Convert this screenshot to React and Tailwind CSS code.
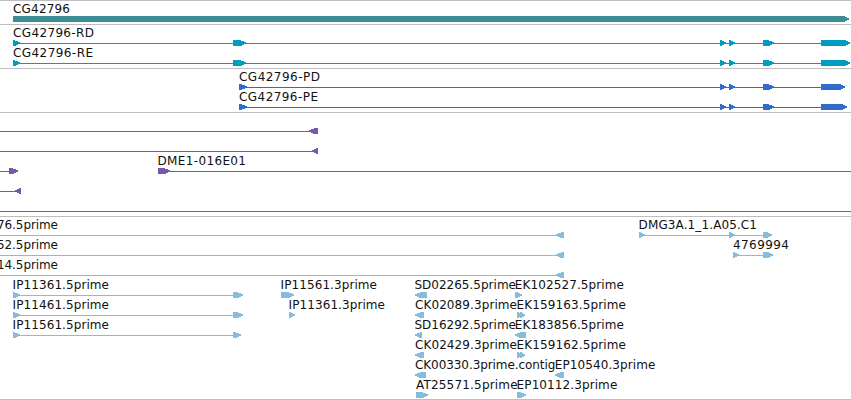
import React from "react";

// Exon glyph: [start, end, tip length]; a negative tip points left.
// Label: [x, text, width].
const tracks = [
  { color: "#3d8e94", lanes: [
    { labels: [[13, "CG42796", 57]], exons: [[13, 849, 6]] },
  ]},
  { color: "#009dc0", lanes: [
    { labels: [[13, "CG42796-RD", 81]], lines: [[13, 845]], exons: [[13, 20, 7], [233, 246, 7], [720, 726, 6], [729, 735, 6], [763, 769, 6], [765, 774, 7], [821, 850, 6]] },
    { labels: [[13, "CG42796-RE", 80]], lines: [[13, 845]], exons: [[13, 20, 7], [233, 246, 7], [720, 726, 6], [729, 735, 6], [763, 769, 6], [765, 774, 7], [821, 850, 6]] },
  ]},
  { color: "#306bcd", lanes: [
    { labels: [[239, "CG42796-PD", 81]], lines: [[239, 840]], exons: [[239, 247, 8], [720, 726, 6], [729, 735, 6], [763, 769, 6], [765, 774, 7], [821, 845, 6]] },
    { labels: [[239, "CG42796-PE", 79]], lines: [[239, 842]], exons: [[239, 247, 8], [720, 726, 6], [729, 735, 6], [763, 769, 6], [765, 774, 7], [821, 847, 6]] },
  ]},
  { color: "#7759a8", lanes: [
    { lines: [[0, 314]], exons: [[309, 318, -7]] },
    { lines: [[0, 316]], exons: [[312, 318, -6]] },
    { labels: [[157.5, "DME1-016E01", 88.5]], lines: [[0, 12], [160, 851]], exons: [[9, 18, 7], [158, 170, 7]] },
    { lines: [[0, 18]], exons: [[15, 21, -6]] },
    { lines: [[0, 851]] },
  ]},
  { color: "#87bcdc", lanes: [
    { labels: [[-3, "76.5prime", 61], [638.6, "DMG3A.1_1.A05.C1", 118.4]], lines: [[0, 560], [639, 769]], exons: [[556, 564, -7], [639, 645, 6], [729, 735, 6], [763, 769, 6], [765, 772, 6]] },
    { labels: [[-3, "52.5prime", 61], [733, "4769994", 56]], lines: [[0, 560], [733, 769]], exons: [[556, 564, -7], [733, 739, 6], [763, 769, 6], [765, 773, 6]] },
    { labels: [[-3, "14.5prime", 61]], lines: [[0, 560]], exons: [[556, 564, -7]] },
    { labels: [[12.6, "IP11361.5prime", 96.4], [280.6, "IP11561.3prime", 96.4], [414.4, "SD02265.5prime", 101.6], [514.8, "EK102527.5prime", 109.2]], lines: [[13, 238]], exons: [[13, 20, 7], [233, 243, 7], [281, 294, 7], [415, 427, -7], [515, 522, 6]] },
    { labels: [[12.6, "IP11461.5prime", 96.4], [288.6, "IP11361.3prime", 96.4], [415, "CK02089.3prime", 102], [516.6, "EK159163.5prime", 109.4]], lines: [[13, 238]], exons: [[13, 20, 7], [233, 243, 7], [289, 295, 6], [415, 424, -7], [517, 522, 5], [520, 525, 5]] },
    { labels: [[12.6, "IP11561.5prime", 96.4], [414.4, "SD16292.5prime", 101.6], [514.8, "EK183856.5prime", 109.2]], lines: [[13, 238]], exons: [[13, 20, 7], [233, 241, 7], [415, 422, -7], [515, 526, -7]] },
    { labels: [[415, "CK02429.3prime", 102], [516.6, "EK159162.5prime", 109.4]], exons: [[415, 424, -7], [517, 522, 5], [520, 525, 5]] },
    { labels: [[415, "CK00330.3prime.contig", 140.4], [554.7, "EP10540.3prime", 100.7]], exons: [[415, 426, -7], [555, 564, -7]] },
    { labels: [[416, "AT25571.5prime", 101.6], [516.6, "EP10112.3prime", 100.7]], exons: [[416, 428, 7], [517, 526, 7]] },
  ]},
];

function exonPoints([a, b, tip]) {
  const base = b - tip;
  const back = a - tip;
  return tip > 0
    ? `${a},12 ${base + 1},12 ${base + tip * 0.6},13.2 ${b},14.5 ${b},15.6 ${base + tip * 0.6},17 ${base + 1},18 ${a},18`
    : `${b},12 ${back - 1},12 ${back + tip * 0.6},13.2 ${a},14.5 ${a},15.6 ${back + tip * 0.6},17 ${back - 1},18 ${b},18`;
}

function Lane({ labels = [], lines = [], exons = [], color }) {
  return (
    <svg className="block h-5 w-[851px] shrink-0 overflow-visible" viewBox="0 0 851 20">
      <g fill={color} shapeRendering="crispEdges">
        {lines.map(([a, b], i) => <rect key={i} x={a} y="15" width={b - a} height="1" />)}
        {exons.map((e, i) => <polygon key={i} points={exonPoints(e)} />)}
      </g>
      {labels.map(([x, text, width]) => (
        <text key={x} x={x} y="9" textLength={width} className="fill-[#111111] font-['DejaVu_Sans',sans-serif] text-[12px]">
          {text}
        </text>
      ))}
    </svg>
  );
}

export default function App() {
  return (
    <main className="flex h-[400px] w-[851px] flex-col overflow-hidden border-b border-[#bebebe] bg-white">
      {tracks.map((track) => (
        <section key={track.color} className="flex shrink-0 flex-col border-t border-[#bebebe] pt-[3px]">
          {track.lanes.map((lane, i) => <Lane key={i} {...lane} color={track.color} />)}
        </section>
      ))}
    </main>
  );
}
